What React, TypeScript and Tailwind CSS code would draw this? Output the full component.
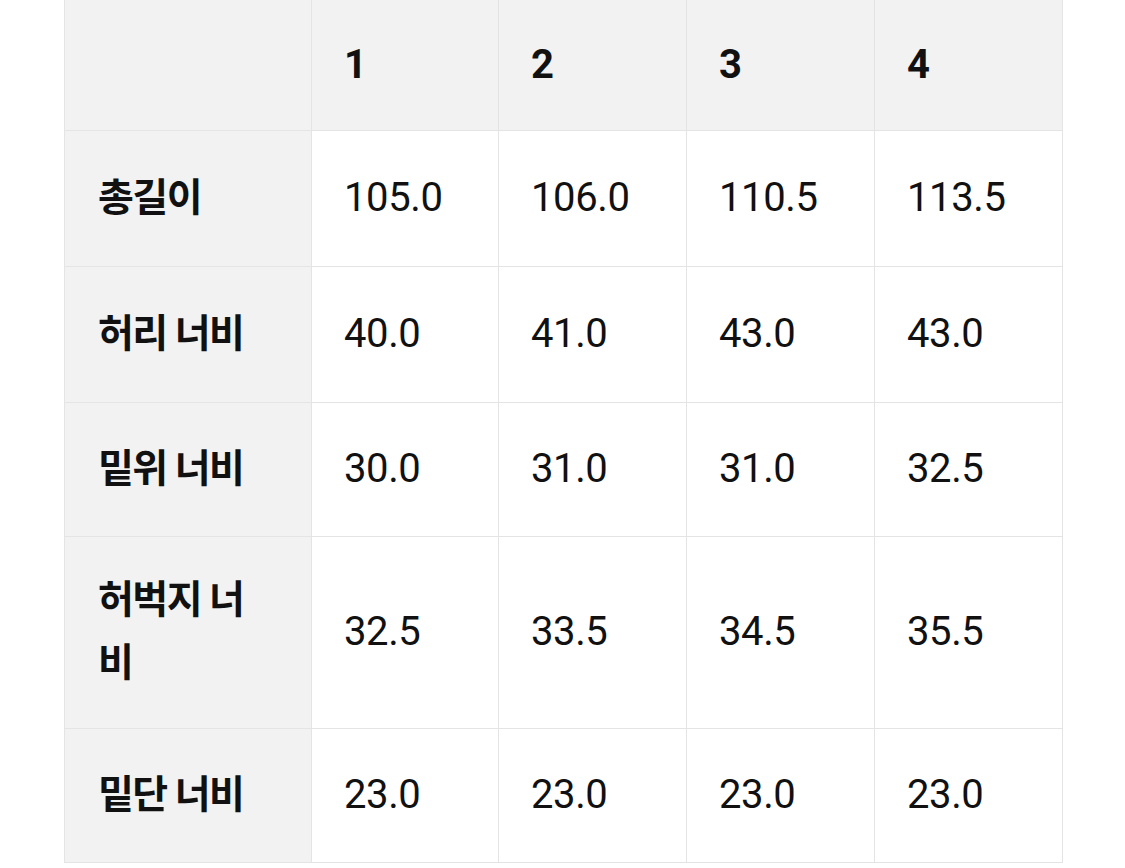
const sizes = ["1", "2", "3", "4"];

const rows: { label: string; values: string[]; h: string }[] = [
  { label: "총길이", values: ["105.0", "106.0", "110.5", "113.5"], h: "h-[136px]" },
  { label: "허리 너비", values: ["40.0", "41.0", "43.0", "43.0"], h: "h-[136px]" },
  { label: "밑위 너비", values: ["30.0", "31.0", "31.0", "32.5"], h: "h-[134px]" },
  { label: "허벅지 너비", values: ["32.5", "33.5", "34.5", "35.5"], h: "h-[192px]" },
  { label: "밑단 너비", values: ["23.0", "23.0", "23.0", "23.0"], h: "h-[134px]" },
];

export default function App() {
  return (
    <div className="min-h-[868px] w-[1125px] bg-white pl-[64px] font-['Roboto','Noto_Sans_CJK_KR',sans-serif] text-[#111111]">
      <table className="w-[998px] table-fixed border-collapse">
        <colgroup>
          <col className="w-[247px]" />
          <col className="w-[187px]" />
          <col className="w-[188px]" />
          <col className="w-[188px]" />
          <col className="w-[188px]" />
        </colgroup>
        <thead>
          <tr className="h-[130px] bg-[#f2f2f2]">
            <th className="border border-t-0 border-[#e4e4e4]" />
            {sizes.map((s) => (
              <th
                key={s}
                className="border border-t-0 border-[#e4e4e4] pl-[32px] text-left align-middle text-[40px] font-bold"
              >
                {s}
              </th>
            ))}
          </tr>
        </thead>
        <tbody>
          {rows.map((row) => (
            <tr key={row.label} className={row.h}>
              <td className="border border-[#e4e4e4] bg-[#f2f2f2] pl-[33px] pr-[56px] align-middle text-[39px] leading-[63px] font-bold tracking-[-0.04em]">
                {row.label}
              </td>
              {row.values.map((v, i) => (
                <td
                  key={i}
                  className="border border-[#e4e4e4] pl-[32px] align-middle text-[40px] font-normal tracking-[-0.01em]"
                >
                  {v}
                </td>
              ))}
            </tr>
          ))}
        </tbody>
      </table>
    </div>
  );
}
